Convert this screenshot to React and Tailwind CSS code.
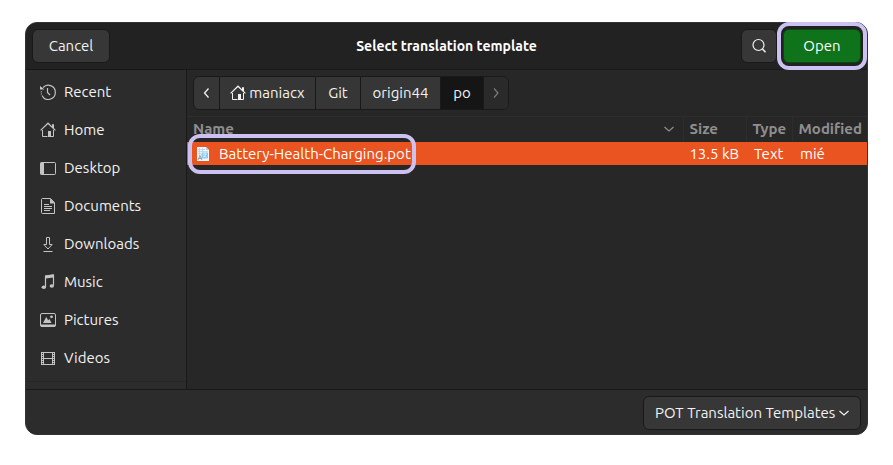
import React from "react";

function Icon({ children, className = "" }) {
  return (
    <svg
      viewBox="0 0 16 16"
      width="16"
      height="16"
      fill="none"
      stroke="currentColor"
      strokeWidth="1"
      aria-hidden="true"
      className={`shrink-0 ${className}`}
    >
      {children}
    </svg>
  );
}

const RecentIcon = () => (
  <Icon>
    <path d="M3 3.600A7 7 0 0 1 15.300 8.200 7 7 0 0 1 2 11.500" strokeWidth="1.200" />
    <path d="M1.300 10.500V7" strokeDasharray="1.200 1" />
    <path d="M0 2v3.500h4.500z" fill="currentColor" stroke="none" />
    <path d="M7.500 4v4.500l2.500 2.500" strokeWidth="1.200" />
  </Icon>
);

const HomeIcon = () => (
  <Icon>
    <path d="M.6 8.400 8 1.200l7.400 7.200" strokeWidth="1.200" />
    <path d="M2.500 8v6.500h5M11 14.500h2.500V8M12.500 5V2.500h1v3.500" />
    <path d="M8 9h3v6H8z" fill="currentColor" stroke="none" />
  </Icon>
);

const DesktopIcon = () => (
  <Icon>
    <rect x=".5" y="2.5" width="15" height="12" rx="1" />
    <path d="M.5 2.5H4v12H.5z" fill="currentColor" stroke="none" />
  </Icon>
);

const DocumentsIcon = () => (
  <Icon>
    <path d="M2.5 .5h8l4 4v11h-12q-1 0-1-1v-13q0-1 1-1z" />
    <path d="M10 .5v5h5z" fill="currentColor" stroke="none" />
    <path d="M4 6.5h5M4 8.5h8M4 10.5h8M4 12.5h6" />
  </Icon>
);

const DownloadsIcon = () => (
  <Icon>
    <path d="M6.500 1.500h3v7h2.700L8 13 3.800 8.500h2.700zM3.500 15.500h9" />
  </Icon>
);

const MusicIcon = () => (
  <Icon>
    <path d="M5.5 13V2l8-1v10.5" strokeWidth="1.2" />
    <path d="M5.5 1.5l8-1v3l-8 1z" fill="currentColor" stroke="none" />
    <ellipse cx="3.8" cy="13.3" rx="2.2" ry="1.8" fill="currentColor" stroke="none" />
    <ellipse cx="11.8" cy="12" rx="2.2" ry="1.8" fill="currentColor" stroke="none" />
  </Icon>
);

const PicturesIcon = () => (
  <Icon>
    <rect x=".5" y="1.5" width="15" height="13" rx="1.5" />
    <path d="M.5 12.5h15v1.5l-1 .9h-13l-1-.9z" fill="currentColor" stroke="none" />
    <path d="M3 11 6.2 5l2 3.2L9.5 7l2 4z" fill="currentColor" stroke="none" />
    <circle cx="11.5" cy="4.8" r="1.4" fill="currentColor" stroke="none" />
  </Icon>
);

const VideosIcon = () => (
  <Icon>
    <path d="M1.5 2v13M3.5 2v13M12.5 2v13M14.5 2v13M3.5 2.5h9M3.5 8.5h9M3.5 14.5h9" />
    <path d="M2.5 2v13M13.5 2v13" strokeDasharray="1 1" />
  </Icon>
);

const ChevronDown = ({ className = "" }) => (
  <Icon className={className}>
    <path d="M3.500 6L8 10l4.500-4" strokeWidth="1.200" />
  </Icon>
);

const PotFileIcon = () => (
  <svg viewBox="0 0 14 16" width="14" height="16" aria-hidden="true" className="shrink-0">
    <path d="M1 1h9l3 3v11H1z" fill="#f4f8fb" />
    <path d="M10 1v3h3z" fill="#b9cddb" />
    <path d="M2 3.5h7M2 5.5h10M3.5 2v8M6.5 2v4M2 7.500h3" stroke="#a9cfe8" strokeWidth=".7" />
    <path d="M5.500 6.500h6.500v6H5.500z" fill="#8ccaf3" />
    <path d="M7 8h3.500M8.700 7v1M10 8q-.5 2.500-3 3M7.500 9l3 2.500" stroke="#e8f5ff" strokeWidth=".7" fill="none" />
    <path d="M2 14l2-4.500 2 4.500M2.700 12.500h2.600" stroke="#8396a3" strokeWidth=".9" fill="none" />
  </svg>
);

const places = [
  ["Recent", RecentIcon],
  ["Home", HomeIcon],
  ["Desktop", DesktopIcon],
  ["Documents", DocumentsIcon],
  ["Downloads", DownloadsIcon],
  ["Music", MusicIcon],
  ["Pictures", PicturesIcon],
  ["Videos", VideosIcon],
];

const button = "h-[34px] rounded-md border border-[#191919] bg-[#373737]";
const crumb = "flex h-full items-center border-r border-[#191919]";

export default function App() {
  return (
    <div className="flex min-h-screen bg-white px-[25px] pt-[22px] pb-[30px] font-['Ubuntu','Noto_Sans',sans-serif] text-[15px] leading-5 text-[#f2f2f2]">
      <main className="flex min-w-0 flex-1 flex-col rounded-xl border border-[#343434] bg-[#272727]">
        <header className="grid h-[47px] grid-cols-[1fr_auto_1fr] items-center rounded-t-xl border-b border-[#181818] bg-[#222222] px-[6px]">
          <div>
            <button type="button" className={`${button} w-[78px]`}>
              Cancel
            </button>
          </div>
          <h1 className="text-sm font-semibold text-white">Select translation template</h1>
          <div className="flex justify-end gap-[6px]">
            <button type="button" aria-label="Search" className={`${button} flex w-[36px] items-center justify-center`}>
              <Icon>
                <circle cx="7.500" cy="7" r="5.500" strokeWidth="1.200" />
                <path d="M11.500 11l3 3.200" strokeWidth="1.500" />
              </Icon>
            </button>
            <div className="relative">
              <button type="button" className="h-[34px] w-[78px] rounded-md border border-[#0a4a12] bg-[#0e731b] text-white">
                Open
              </button>
              <span className="pointer-events-none absolute -inset-x-[6px] -inset-y-[7px] rounded-xl border-4 border-[#cbc2f2]" />
            </div>
          </div>
        </header>

        <div className="flex flex-1">
          <nav aria-label="Places" className="flex w-[161px] shrink-0 flex-col border-r border-[#191919] bg-[#2c2c2c]">
            <ul className="flex-1 pt-[3px]">
              {places.map(([name, PlaceIcon]) => (
                <li key={name}>
                  <a href="#" className="flex h-[38px] items-center gap-2 pl-[14px]">
                    <span className="text-[#c4c4c4]">
                      <PlaceIcon />
                    </span>
                    {name}
                  </a>
                </li>
              ))}
            </ul>
            <div className="h-2 border-t border-[#262626]" />
          </nav>

          <section className="min-w-0 flex-1">
            <div className="px-[6px] py-[6px]">
              <div className="flex h-[34px] w-max items-center overflow-hidden rounded-md border border-[#191919] bg-[#363636]">
                <button type="button" aria-label="Back" className={`${crumb} w-[26px] justify-center`}>
                  <Icon>
                    <path d="M9.500 3.500L5.500 8l4 4.500" strokeWidth="1.300" />
                  </Icon>
                </button>
                <button type="button" className={`${crumb} w-[96px] justify-center gap-[3px]`}>
                  <HomeIcon />
                  maniacx
                </button>
                <button type="button" className={`${crumb} w-[45px] justify-center`}>
                  Git
                </button>
                <button type="button" className={`${crumb} w-[80px] justify-center`}>
                  origin44
                </button>
                <button type="button" aria-current="page" className={`${crumb} w-[43px] justify-center bg-[#151515]`}>
                  po
                </button>
                <button type="button" aria-label="Forward" className="flex h-full w-[24px] items-center justify-center bg-[#2a2a2a] text-[#7c7c7c]">
                  <Icon>
                    <path d="M6 3.500L10 8l-4 4.500" strokeWidth="1.200" />
                  </Icon>
                </button>
              </div>
            </div>

            <table className="w-full table-fixed border-collapse border-t border-[#2d2d2d] text-left">
              <colgroup>
                <col />
                <col className="w-[63px]" />
                <col className="w-[46px]" />
                <col className="w-[75px]" />
              </colgroup>
              <thead className="text-[#8f8f8f]">
                <tr className="h-[25px]">
                  <th scope="col" className="border-r border-[#2d2d2d] py-0 pr-[6px] pl-[6px] font-semibold">
                    <span className="flex items-center justify-between">
                      Name
                      <ChevronDown />
                    </span>
                  </th>
                  <th scope="col" className="border-r border-[#2d2d2d] py-0 pl-[6px] font-semibold">Size</th>
                  <th scope="col" className="border-r border-[#2d2d2d] py-0 pl-[6px] font-semibold">Type</th>
                  <th scope="col" className="py-0 pl-[6px] font-semibold">Modified</th>
                </tr>
              </thead>
              <tbody>
                <tr className="h-[23px] bg-[#e95420] text-white">
                  <td className="px-0 pt-[2px] pb-0">
                    <div className="relative flex w-[229px] items-center gap-[9px] pl-[9px]">
                      <PotFileIcon />
                      <span className="whitespace-nowrap">Battery-Health-Charging.pot</span>
                      <span className="pointer-events-none absolute inset-x-0 -inset-y-[10px] ml-px rounded-xl border-4 border-[#cbc2f2]" />
                    </div>
                  </td>
                  <td className="pt-[2px] pr-[7px] pb-0 text-right whitespace-nowrap">13.5 kB</td>
                  <td className="pt-[2px] pb-0 pl-[8px]">Text</td>
                  <td className="pt-[2px] pb-0 pl-[8px]">mié</td>
                </tr>
              </tbody>
            </table>
          </section>
        </div>

        <footer className="flex h-[45px] items-end justify-end rounded-b-xl border-t border-[#181818] bg-[#2c2c2c] pr-[6px] pb-1">
          <div className="relative">
            <select aria-label="File type" className={`${button} w-[218px] appearance-none pr-[22px] pl-[11px]`}>
              <option>POT Translation Templates</option>
            </select>
            <ChevronDown className="pointer-events-none absolute top-[9px] right-[9px]" />
          </div>
        </footer>
      </main>
    </div>
  );
}
